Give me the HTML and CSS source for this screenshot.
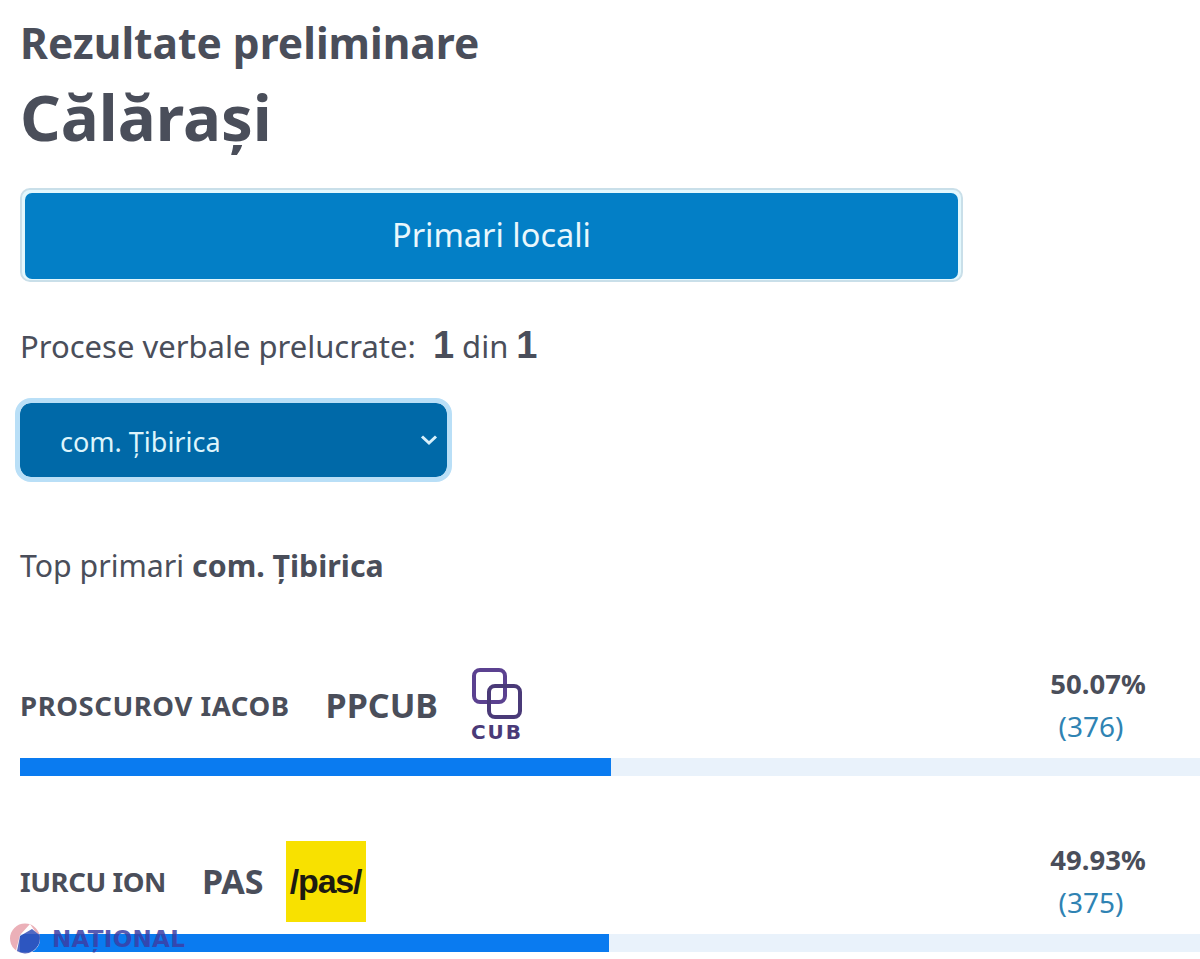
FILE: index.html
```html
<!DOCTYPE html>
<html lang="ro">
<head>
  <meta charset="UTF-8" />
  <title>Rezultate preliminare</title>
  <link rel="stylesheet" href="styles.css">
</head>
<body>
<div class="page">
  <h3 class="subtitle">Rezultate preliminare</h3>
  <h1 class="title">Călăraşi</h1>

  <div class="tab-frame">
    <button class="tab" type="button">Primari locali</button>
  </div>

  <p class="processed">Procese verbale prelucrate: <b class="num first">1</b> din <b class="num">1</b></p>

  <div class="select-box">
    <span class="select-text">com. Ţibirica</span>
    <svg class="chevron" width="18" height="12" viewBox="0 0 18 12">
      <path d="M2 2.5 L9 9 L16 2.5" fill="none" stroke="#d8f0fb" stroke-width="3"/>
    </svg>
  </div>

  <p class="top-label">Top primari <b>com. Ţibirica</b></p>

  <div class="candidate first-candidate">
    <div class="cand-row">
      <div class="cand-info">
        <span class="cand-name">PROSCUROV IACOB</span>
        <span class="cand-party party-cub">PPCUB</span>
        <div class="logo-cub">
          <svg width="56" height="56" viewBox="0 0 56 56">
            <rect x="5" y="4" width="31" height="32" rx="6" fill="none" stroke="#5b4190" stroke-width="4"/>
            <rect x="20" y="20" width="31" height="31" rx="6" fill="none" stroke="#4a3a78" stroke-width="4"/>
          </svg>
          <span class="cub-text">CUB</span>
        </div>
      </div>
      <div class="cand-score">
        <b>50.07%</b>
        <span>(376)</span>
      </div>
    </div>
    <div class="bar"><div class="bar-fill" style="width: 50.07%"></div></div>
  </div>

  <div class="candidate second-candidate">
    <div class="cand-row">
      <div class="cand-info">
        <span class="cand-name">IURCU ION</span>
        <span class="cand-party party-pas">PAS</span>
        <div class="logo-pas">/pas/</div>
      </div>
      <div class="cand-score">
        <b>49.93%</b>
        <span>(375)</span>
      </div>
    </div>
    <div class="bar"><div class="bar-fill" style="width: 49.93%"></div></div>
  </div>
</div>

<div class="watermark">
  <svg width="30" height="31" viewBox="0 0 30 31">
    <circle cx="15" cy="15.5" r="15" fill="#e8a3ac"/>
    <path d="M20 1 L30 15.5 A15 15 0 0 1 6 27.5 L10 12 Z" fill="#fff"/>
    <path d="M10 13 L22 6 L29.5 12 A15 15 0 0 1 7 28 Z" fill="#3450b8"/>
  </svg>
  <span>NAȚIONAL</span>
</div>
</body>
</html>
```

FILE: styles.css
```css
body {
  margin: 0;
  background-color: #fff;
  color: #4a4e5a;
  font-family: 'Noto Sans', sans-serif;
  overflow: hidden;
}

.page {
  padding: 16px 0 0 20px;
}

.subtitle {
  margin: 0;
  font-size: 42.5px;
  line-height: 54px;
  font-weight: 700;
}

.title {
  margin: 8px 0 0;
  font-size: 63.5px;
  line-height: 78px;
  font-weight: 700;
}

.tab-frame {
  box-sizing: border-box;
  width: 943px;
  height: 94px;
  margin-top: 32px;
  padding: 3px 3px 1px;
  border: 2px solid #c9dfe9;
  border-radius: 10px;
  background-color: #e3f8fd;
}

.tab {
  display: block;
  width: 100%;
  height: 100%;
  padding-bottom: 4px;
  border: none;
  border-radius: 7px;
  background-color: #037fc6;
  color: #e9f7fc;
  font-family: 'Noto Sans', sans-serif;
  font-size: 32.5px;
}

.processed {
  margin: 40px 0 0;
  font-size: 31px;
  line-height: 46px;
}

.num {
  font-size: 38px;
  font-family: 'Liberation Sans', sans-serif;
}

.num.first {
  margin-left: 9px;
}

.select-box {
  box-sizing: border-box;
  display: flex;
  align-items: center;
  justify-content: space-between;
  width: 437px;
  height: 84px;
  margin-top: 29px;
  margin-left: -5px;
  padding: 0 9px 0 40px;
  border: 5px solid #b9dff7;
  border-radius: 16px;
  background-color: #0069a8;
  background-clip: padding-box;
  color: #ddf4fb;
  font-size: 27px;
}

.select-text {
  padding-top: 3px;
}

.top-label {
  margin: 61px 0 0;
  font-size: 30.3px;
  line-height: 46px;
}

.candidate {
  display: flex;
  flex-direction: column;
}

.first-candidate {
  margin-top: 69px;
}

.second-candidate {
  margin-top: 58px;
}

.cand-row {
  display: flex;
  align-items: center;
  justify-content: space-between;
  height: 100px;
  box-sizing: border-box;
  padding-bottom: 6px;
}

.cand-info {
  display: flex;
  align-items: center;
}

.cand-name {
  font-size: 27.5px;
  font-weight: 700;
}

.first-candidate .cand-name {
  letter-spacing: 0.55px;
}

.second-candidate .cand-name {
  letter-spacing: -0.45px;
}

.cand-party {
  font-size: 34px;
  font-weight: 700;
}

.party-cub {
  margin-left: 36px;
}

.party-pas {
  margin-left: 36px;
}

.logo-cub {
  display: flex;
  flex-direction: column;
  align-items: center;
  margin-left: 31px;
}

.cub-text {
  margin-top: -2px;
  color: #4a3a78;
  font-family: 'DejaVu Sans', sans-serif;
  font-size: 20px;
  line-height: 24px;
  font-weight: 700;
  letter-spacing: 2px;
}

.logo-pas {
  display: flex;
  align-items: center;
  justify-content: center;
  width: 80px;
  height: 81px;
  margin-left: 22px;
  background-color: #f8e100;
  color: #1d1a10;
  font-family: 'Liberation Sans', sans-serif;
  font-size: 34px;
  font-weight: 700;
  letter-spacing: -1.2px;
}

.cand-score {
  display: flex;
  flex-direction: column;
  align-items: center;
  width: 110px;
  margin-right: 47px;
  font-size: 28px;
  line-height: 42px;
}

.cand-score b {
  font-size: 27.5px;
}

.cand-score span {
  margin-right: 14px;
  color: #2f83b3;
}

.bar {
  height: 18px;
  background-color: #e9f2fb;
}

.bar-fill {
  height: 100%;
  background-color: #0a7bf0;
}

.watermark {
  position: absolute;
  left: 10px;
  top: 923px;
  display: flex;
  align-items: center;
  gap: 12px;
  opacity: 0.85;
  color: #3b3fa6;
  font-family: 'DejaVu Sans', sans-serif;
  font-size: 23px;
  font-weight: 700;
  letter-spacing: 0.3px;
}
```
